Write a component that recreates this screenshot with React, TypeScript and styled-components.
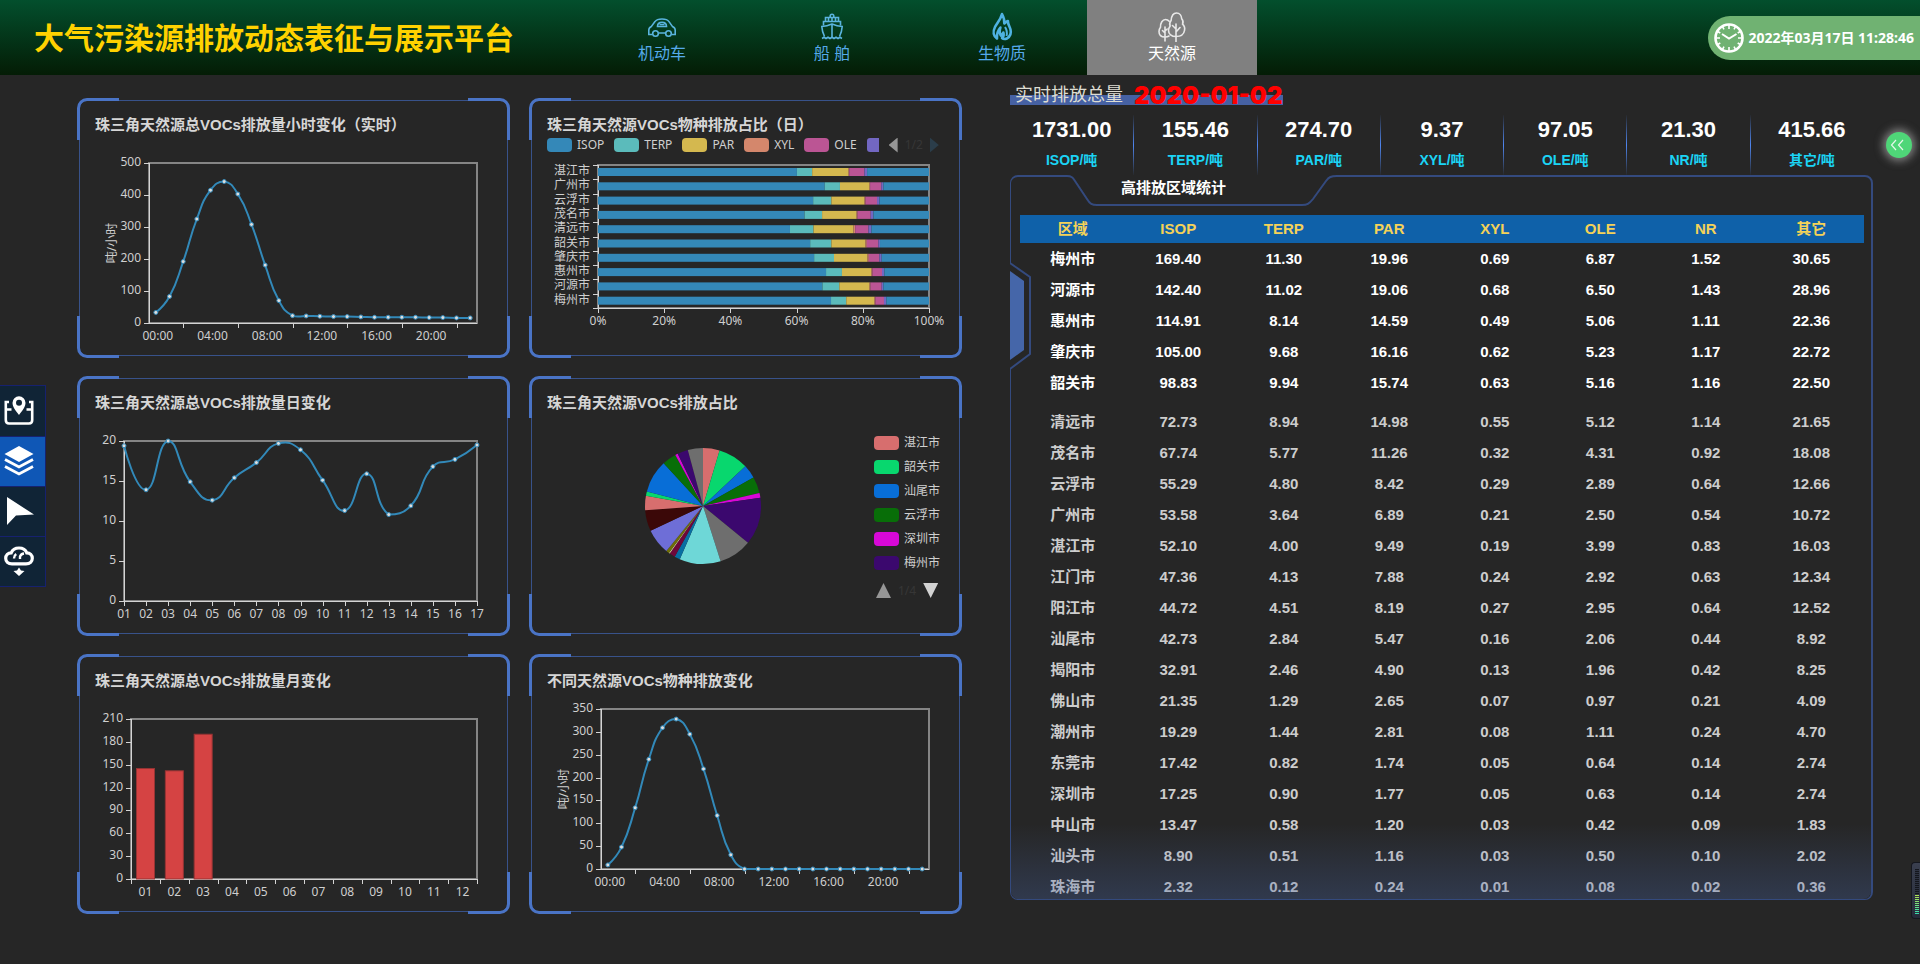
import React from 'react';
import styled, { createGlobalStyle, css } from 'styled-components';

const GlobalStyle = createGlobalStyle`
  *, *::before, *::after { box-sizing: border-box; }
  body {
    margin: 0;
    background: #262626;
    color: #fff;
    font-family: "Liberation Sans", "Noto Sans CJK SC", sans-serif;
  }
  button { font: inherit; border: 0; padding: 0; background: none; cursor: pointer; }
`;

/* ---------- header ---------- */

const Header = styled.header`
  display: flex;
  height: 75px;
  background: linear-gradient(#034f2d, #041c05);
`;

const Brand = styled.h1`
  width: 30%;
  margin: 0;
  padding-left: 34px;
  color: #ffd200;
  font: 700 30px/72px STKaiti, KaiTi, "Noto Sans CJK SC", sans-serif;
  white-space: nowrap;
`;

const Nav = styled.nav`
  display: flex;
  margin-left: 1px;
`;

const NavLink = styled.a<{ $active?: boolean }>`
  display: flex;
  flex-direction: column;
  align-items: center;
  width: 170px;
  padding-top: 12px;
  color: ${(p) => (p.$active ? '#fff' : '#55aaea')};
  background: ${(p) => (p.$active ? '#808080' : 'transparent')};
  font-size: 16px;
  line-height: 24px;
  text-decoration: none;
`;

const NavIcon = styled.svg`
  width: 30px;
  height: 30px;
  fill: none;
  stroke: ${(p) => p.color || '#5ab4de'};
  stroke-width: 1.6;
`;

const Clock = styled.div`
  display: flex;
  align-items: center;
  gap: 4px;
  height: 44px;
  margin: 16px 0 0 auto;
  padding: 0 6px;
  border-radius: 22px 0 0 22px;
  background: #70b272;
  font: 700 14px/20px "Noto Sans", "Noto Sans CJK SC", sans-serif;
  white-space: nowrap;
`;

const ClockIcon = styled.svg`
  width: 30px;
  height: 30px;
  fill: none;
  stroke: #fff;
`;

/* ---------- page ---------- */

const Main = styled.main`
  display: flex;
  align-items: flex-start;
`;

const Tools = styled.aside`
  flex: none;
  width: 46px;
  margin-top: 310px;
  border: 1px solid #16216f;
  border-left: 0;
`;

const ToolButton = styled.button<{ $active?: boolean }>`
  display: block;
  width: 100%;
  height: 50px;
  padding: 0 0 2px 4px;
  background: ${(p) => (p.$active ? '#0f57b6' : '#102436')};
  text-align: left;
  & + & { border-top: 1px solid #16216f; }
`;

const ToolIcon = styled.svg`
  display: block;
  width: 30px;
  height: 30px;
  fill: none;
  stroke: #fff;
`;

const Columns = styled.div`
  flex: 1;
  display: grid;
  grid-template-columns: 885fr 863fr;
  gap: 48px;
  padding: 0 47px 40px 31px;
`;

const Charts = styled.section`
  display: grid;
  grid-template-columns: 1fr 1fr;
  gap: 18px 19px;
  align-content: start;
  padding-top: 23px;
`;

/* ---------- chart panel ---------- */

const PanelBox = styled.article`
  position: relative;
  min-height: 260px;
  padding-top: 17px;
  &::before {
    content: "";
    position: absolute;
    inset: 2px;
    border: 1px solid #38528a;
    border-radius: 8px;
    pointer-events: none;
  }
`;

const Corner = styled.span<{ $v: 'top' | 'bottom'; $h: 'left' | 'right' }>`
  position: absolute;
  ${(p) => css`
    ${p.$v}: 0;
    ${p.$h}: 0;
    border-${p.$v}: 3px solid #4a74c6;
    border-${p.$h}: 3px solid #4a74c6;
    border-${p.$v}-${p.$h}-radius: 10px;
  `}
  width: 42px;
  height: 42px;
`;

const PanelTitle = styled.h2`
  margin: 0;
  padding-left: 18px;
  color: #d6d6d6;
  font-size: 15px;
  line-height: 20px;
  white-space: nowrap;
`;

const Drawing = styled.svg`
  display: block;
  width: 100%;
  font: 12px "Noto Sans", "Noto Sans CJK SC", sans-serif;
  text { fill: #cfcfcf; }
`;

const PieRow = styled.div`
  display: flex;
`;

const PieDrawing = styled.svg`
  flex: 345;
  min-width: 0;
`;

const LegendRow = styled.div`
  display: flex;
  align-items: center;
  gap: 10px;
  height: 20px;
  padding-left: 18px;
  overflow: hidden;
`;

const LegendColumn = styled.div`
  flex: 88;
  display: flex;
  flex-direction: column;
  padding-top: 18px;
`;

const LegendItem = styled.button<{ $tall?: boolean }>`
  display: flex;
  align-items: center;
  gap: 5px;
  height: ${(p) => (p.$tall ? 24 : 20)}px;
  color: #cfcfcf;
  font: 12px/16px "Noto Sans", "Noto Sans CJK SC", sans-serif;
  white-space: nowrap;
`;

const Swatch = styled.span<{ $color: string; $cut?: boolean }>`
  width: ${(p) => (p.$cut ? 12 : 25)}px;
  height: 14px;
  border-radius: ${(p) => (p.$cut ? '3px 0 0 3px' : '4px')};
  background: ${(p) => p.$color};
`;

const Pager = styled.div<{ $below?: boolean }>`
  display: flex;
  align-items: center;
  gap: 7px;
  height: ${(p) => (p.$below ? 31 : 20)}px;
  padding-left: ${(p) => (p.$below ? 2 : 0)}px;
  color: #363636;
  font: 12px/16px "Noto Sans", sans-serif;
`;

const Arrow = styled.button<{ $dir: 'up' | 'down' | 'left' | 'right'; $color: string }>`
  width: ${(p) => (p.$dir === 'up' || p.$dir === 'down' ? 15 : 9)}px;
  height: 15px;
  background: ${(p) => p.$color};
  clip-path: ${(p) =>
    ({
      up: 'polygon(50% 0, 100% 100%, 0 100%)',
      down: 'polygon(0 0, 100% 0, 50% 100%)',
      left: 'polygon(100% 0, 100% 100%, 0 50%)',
      right: 'polygon(0 0, 100% 50%, 0 100%)',
    })[p.$dir]};
`;

function Panel({ title, children }: { title: string; children: React.ReactNode }) {
  return (
    <PanelBox>
      <Corner $v="top" $h="left" />
      <Corner $v="top" $h="right" />
      <Corner $v="bottom" $h="left" />
      <Corner $v="bottom" $h="right" />
      <PanelTitle>{title}</PanelTitle>
      {children}
    </PanelBox>
  );
}

/* ---------- chart drawing ---------- */

type Pt = [number, number];
type Area = { left: number; right: number; top: number; bottom: number };

const clamp = (v: number, lo: number, hi: number) => Math.min(hi, Math.max(lo, v));

function smoothPath(pts: Pt[]): string {
  const ys = pts.map((p) => p[1]);
  const lo = Math.min(...ys);
  const hi = Math.max(...ys);
  let d = `M${pts[0][0]} ${pts[0][1]}`;
  let cp: Pt = pts[0];
  for (let i = 1; i < pts.length; i++) {
    const p = pts[i];
    const next = pts[i + 1];
    let inCp: Pt = p;
    let outCp: Pt = p;
    if (next) {
      const prev = pts[i - 1];
      const a = Math.hypot(p[0] - prev[0], p[1] - prev[1]);
      const b = Math.hypot(next[0] - p[0], next[1] - p[1]);
      const r = b / (a + b);
      const vx = next[0] - prev[0];
      const vy = next[1] - prev[1];
      inCp = [p[0] - vx * 0.5 * (1 - r), clamp(p[1] - vy * 0.5 * (1 - r), lo, hi)];
      outCp = [p[0] + vx * 0.5 * r, clamp(p[1] + vy * 0.5 * r, lo, hi)];
    }
    d += `C${cp[0]} ${cp[1]} ${inCp[0]} ${inCp[1]} ${p[0]} ${p[1]}`;
    cp = outCp;
  }
  return d;
}

function Frame({ area }: { area: Area }) {
  const { left, right, top, bottom } = area;
  return (
    <g fill="none" shapeRendering="crispEdges">
      <rect x={left} y={top} width={right - left} height={bottom - top} stroke="#858585" strokeWidth="2" />
      <path d={`M${left + 0.5} ${top}V${bottom + 0.5}H${right}`} stroke="#d4d4d4" />
    </g>
  );
}

function YAxis({ area, max, step }: { area: Area; max: number; step: number }) {
  const ticks = Array.from({ length: max / step + 1 }, (_, i) => i * step);
  return (
    <g>
      {ticks.map((t) => {
        const y = Math.round(area.bottom - (t / max) * (area.bottom - area.top));
        return (
          <g key={t}>
            <path d={`M${area.left - 5} ${y + 0.5}h5`} stroke="#d4d4d4" shapeRendering="crispEdges" />
            <text x={area.left - 8} y={y + 3} textAnchor="end">{t}</text>
          </g>
        );
      })}
    </g>
  );
}

function XTicks({ area, xs }: { area: Area; xs: number[] }) {
  return (
    <path
      d={xs.map((x) => `M${Math.round(x) + 0.5} ${area.bottom}v5`).join('')}
      stroke="#d4d4d4"
      shapeRendering="crispEdges"
    />
  );
}

function Line({ pts }: { pts: Pt[] }) {
  return (
    <g>
      <path d={smoothPath(pts)} fill="none" stroke="#3289b9" strokeWidth="2" />
      {pts.map(([x, y]) => (
        <circle key={x} cx={x} cy={y} r="2" fill="#ddd" stroke="#3289b9" strokeWidth="1" />
      ))}
    </g>
  );
}

const HOURS = ['00:00', '04:00', '08:00', '12:00', '16:00', '20:00'];

function HourChart({ values, max, step, top }: { values: number[]; max: number; step: number; top: number }) {
  const area = { left: 72, right: 400, top, bottom: top + 160 };
  const band = 328 / 24;
  const x = (i: number) => area.left + band * (i + 0.5);
  const pts = values.map((v, i): Pt => [x(i), area.bottom - (v / max) * 160]);
  return (
    <Drawing viewBox="0 37 433 223">
      <Frame area={area} />
      <YAxis area={area} max={max} step={step} />
      <XTicks area={area} xs={[2, 6, 10, 14, 18, 22].map(x)} />
      {HOURS.map((h, i) => (
        <text key={h} x={x(i * 4) + 2} y={area.bottom + 17} textAnchor="middle">{h}</text>
      ))}
      <text transform={`translate(39 ${top + 80}) rotate(-90)`} textAnchor="middle">吨/小时</text>
      <Line pts={pts} />
    </Drawing>
  );
}

const DAILY = [19.4, 13.9, 20, 14.9, 12.6, 15.4, 17.3, 19.7, 18.9, 15.1, 11.3, 15.9, 10.8, 11.9, 16.8, 17.7, 19.5];

const pad2 = (n: number) => String(n).padStart(2, '0');

function DayChart() {
  const area = { left: 47, right: 400, top: 65, bottom: 225 };
  const x = (i: number) => area.left + (353 / 16) * i;
  return (
    <Drawing viewBox="0 37 433 223">
      <Frame area={area} />
      <YAxis area={area} max={20} step={5} />
      <XTicks area={area} xs={DAILY.map((_, i) => x(i))} />
      {DAILY.map((_, i) => (
        <text key={i} x={x(i)} y={242} textAnchor="middle">{pad2(i + 1)}</text>
      ))}
      <Line pts={DAILY.map((v, i): Pt => [x(i), area.bottom - v * 8])} />
    </Drawing>
  );
}

function MonthChart() {
  const area = { left: 54, right: 400, top: 65, bottom: 225 };
  const band = 346 / 12;
  return (
    <Drawing viewBox="0 37 433 223">
      <Frame area={area} />
      <YAxis area={area} max={210} step={30} />
      <XTicks area={area} xs={Array.from({ length: 13 }, (_, i) => area.left + band * i)} />
      {Array.from({ length: 12 }, (_, i) => (
        <text key={i} x={area.left + band * (i + 0.5)} y={242} textAnchor="middle">{pad2(i + 1)}</text>
      ))}
      {[145, 142, 190].map((v, i) => {
        const h = (v / 210) * 160;
        return (
          <rect key={i} x={area.left + band * i + 5.5} y={area.bottom - h} width="18" height={h}
            fill="#d54343" stroke="#963434" strokeWidth="1" />
        );
      })}
    </Drawing>
  );
}

const SPECIES: [string, string][] = [
  ['ISOP', '#3488b8'],
  ['TERP', '#5bbbbb'],
  ['PAR', '#d4b84f'],
  ['XYL', '#d4876c'],
  ['OLE', '#bb5594'],
];
const STACK_COLORS = [...SPECIES.map((s) => s[1]), '#7267c2', '#3488b8'];

/* cumulative share, in tenths of a percent, at the end of each species */
const SHARES: [string, number[]][] = [
  ['湛江市', [601, 647, 757, 759, 805, 813, 1000]],
  ['广州市', [685, 731, 820, 822, 856, 862, 1000]],
  ['云浮市', [650, 705, 805, 808, 843, 850, 1000]],
  ['茂名市', [624, 677, 781, 784, 824, 832, 1000]],
  ['清远市', [580, 651, 772, 777, 817, 826, 1000]],
  ['韶关市', [641, 705, 808, 812, 847, 852, 1000]],
  ['肇庆市', [653, 713, 814, 818, 850, 857, 1000]],
  ['惠州市', [689, 737, 826, 829, 858, 865, 1000]],
  ['河源市', [678, 729, 820, 823, 857, 862, 1000]],
  ['梅州市', [704, 750, 835, 838, 864, 871, 1000]],
];

function StackChart() {
  const area = { left: 69, right: 400, top: 67, bottom: 210 };
  const row = 143 / 10;
  const x = (v: number) => area.left + (v / 1000) * 331;
  return (
    <Drawing viewBox="0 57 433 203">
      <Frame area={area} />
      <XTicks area={area} xs={[0, 200, 400, 600, 800, 1000].map(x)} />
      {[0, 20, 40, 60, 80, 100].map((p) => (
        <text key={p} x={x(p * 10)} y={227} textAnchor="middle">{p}%</text>
      ))}
      {Array.from({ length: 11 }, (_, i) => (
        <path key={i} d={`M64 ${Math.round(area.top + row * i) + 0.5}h5`} stroke="#d4d4d4" shapeRendering="crispEdges" />
      ))}
      {SHARES.map(([city, cuts], r) => {
        const y = area.top + row * r + 3;
        return (
          <g key={city}>
            <text x="61" y={y + 7} textAnchor="end">{city}</text>
            {cuts.map((c, i) => {
              const from = x(i ? cuts[i - 1] : 0);
              return <rect key={i} x={from} y={y} width={x(c) - from} height="8" fill={STACK_COLORS[i]} />;
            })}
          </g>
        );
      })}
    </Drawing>
  );
}

const SLICES: [number, string][] = [
  [16.6, '#d76e6e'], [46.9, '#08d76e'], [60.5, '#086ed7'], [77, '#086e08'], [81.8, '#d708d7'],
  [129.2, '#3b086e'], [162.3, '#6e6e6e'], [203.6, '#6ed7d7'], [209.2, '#086ea2'], [215, '#6e083b'],
  [216, '#d7d7a2'], [219.2, '#6e6e08'], [244.7, '#6e6ed7'], [265.7, '#3b0808'], [280.2, '#d76e6e'],
  [284.6, '#08d76e'], [317.3, '#086ed7'], [331.5, '#086e08'], [334.2, '#d708d7'], [344.8, '#3b086e'],
  [360, '#6e6e6e'],
];

const PIE_LEGEND: [string, string][] = [
  ['湛江市', '#d76e6e'], ['韶关市', '#08d76e'], ['汕尾市', '#086ed7'],
  ['云浮市', '#086e08'], ['深圳市', '#d708d7'], ['梅州市', '#3b086e'],
];

function PieChart() {
  const cx = 174;
  const cy = 130;
  const r = 58;
  const at = (deg: number) => {
    const a = (deg * Math.PI) / 180;
    return `${cx + r * Math.sin(a)} ${cy - r * Math.cos(a)}`;
  };
  return (
    <PieRow>
      <PieDrawing viewBox="0 37 345 223">
        {SLICES.map(([end, color], i) => (
          <path key={end} d={`M${cx} ${cy}L${at(i ? SLICES[i - 1][0] : 0)}A${r} ${r} 0 0 1 ${at(end)}Z`} fill={color} />
        ))}
      </PieDrawing>
      <LegendColumn>
        {PIE_LEGEND.map(([name, color]) => (
          <LegendItem key={name} $tall>
            <Swatch $color={color} />
            {name}
          </LegendItem>
        ))}
        <Pager $below>
          <Arrow $dir="up" $color="#969696" aria-label="上一页" />
          <span>1/4</span>
          <Arrow $dir="down" $color="#d2d2d2" aria-label="下一页" />
        </Pager>
      </LegendColumn>
    </PieRow>
  );
}

const HOURLY = [33, 83, 192, 325, 415, 442, 403, 308, 181, 70, 23, 22, 21, 20, 20, 19, 18, 18, 18, 18, 17, 17, 16, 16];
const HOURLY_SPECIES = [9, 48, 134, 240, 309, 328, 295, 219, 117, 31, 0, 0, 0, 0, 0, 0, 0, 0, 0, 0, 0, 0, 0, 0];

/* ---------- totals and table ---------- */

const Summary = styled.section`
  padding-top: 10px;
`;

const SummaryTitle = styled.h2`
  display: inline-flex;
  gap: 11px;
  height: 20px;
  margin: 0 0 10px;
  padding: 0 1px 0 5px;
  background: linear-gradient(transparent 50%, #4661a3 50%);
  color: #dddcd2;
  font-size: 18px;
  font-weight: 400;
  line-height: 20px;
  vertical-align: top;
  white-space: nowrap;
`;

const DateText = styled.time`
  color: #f00;
  font: 900 24px/22px "Arial Black", Inter, sans-serif;
`;

const Totals = styled.dl`
  display: grid;
  grid-template-columns: repeat(7, 1fr);
  margin: 0;
`;

const Total = styled.div`
  display: flex;
  flex-direction: column-reverse;
  text-align: center;
  font-weight: 700;
  line-height: 30px;
  & + & {
    border-left: 1px solid;
    border-image: linear-gradient(transparent, #4f86f0, transparent) 1;
  }
`;

const TotalName = styled.dt`
  color: #1bd4f5;
  font-size: 14px;
`;

const TotalValue = styled.dd`
  margin: 0;
  font-size: 22px;
`;

const Board = styled.div`
  position: relative;
  border: solid #344a7e;
  border-width: 2px 2px 1px 1px;
  border-radius: 8px;
  &::after {
    content: "";
    position: absolute;
    inset: auto 0 0;
    height: 75px;
    border-radius: 0 0 8px 8px;
    background: linear-gradient(transparent, rgba(70, 98, 160, 0.32));
    pointer-events: none;
  }
`;

const BoardTab = styled.svg`
  position: absolute;
  top: -2px;
  left: 56px;
  width: 270px;
  height: 32px;
`;

const BoardGrip = styled.svg`
  position: absolute;
  top: 84px;
  left: -1px;
  width: 22px;
  height: 112px;
`;

const BoardTitle = styled.h3`
  position: relative;
  margin: 0 0 16px;
  padding-left: 110px;
  font-size: 15px;
  line-height: 22px;
`;

const TableWrap = styled.div`
  margin: 0 7px -3px 9px;
`;

const Table = styled.table`
  width: 100%;
  table-layout: fixed;
  border-collapse: collapse;
  font-size: 15px;
  font-weight: 700;
  text-align: center;
  line-height: 20px;
  th, td { padding: 0; }
  thead tr { height: 28px; background: #0f61a9; color: #f4d258; }
`;

const TableRow = styled.tr<{ $top?: boolean; $spaced?: boolean }>`
  height: ${(p) => (p.$spaced ? 39 : 31)}px;
  color: ${(p) => (p.$top ? '#fff' : '#cdcdcd')};
  td { padding-top: ${(p) => (p.$spaced ? 8 : 0)}px; }
`;

const TOTALS: [string, string][] = [
  ['ISOP/吨', '1731.00'], ['TERP/吨', '155.46'], ['PAR/吨', '274.70'], ['XYL/吨', '9.37'],
  ['OLE/吨', '97.05'], ['NR/吨', '21.30'], ['其它/吨', '415.66'],
];

const ROWS = `梅州市 169.40 11.30 19.96 0.69 6.87 1.52 30.65
河源市 142.40 11.02 19.06 0.68 6.50 1.43 28.96
惠州市 114.91 8.14 14.59 0.49 5.06 1.11 22.36
肇庆市 105.00 9.68 16.16 0.62 5.23 1.17 22.72
韶关市 98.83 9.94 15.74 0.63 5.16 1.16 22.50
清远市 72.73 8.94 14.98 0.55 5.12 1.14 21.65
茂名市 67.74 5.77 11.26 0.32 4.31 0.92 18.08
云浮市 55.29 4.80 8.42 0.29 2.89 0.64 12.66
广州市 53.58 3.64 6.89 0.21 2.50 0.54 10.72
湛江市 52.10 4.00 9.49 0.19 3.99 0.83 16.03
江门市 47.36 4.13 7.88 0.24 2.92 0.63 12.34
阳江市 44.72 4.51 8.19 0.27 2.95 0.64 12.52
汕尾市 42.73 2.84 5.47 0.16 2.06 0.44 8.92
揭阳市 32.91 2.46 4.90 0.13 1.96 0.42 8.25
佛山市 21.35 1.29 2.65 0.07 0.97 0.21 4.09
潮州市 19.29 1.44 2.81 0.08 1.11 0.24 4.70
东莞市 17.42 0.82 1.74 0.05 0.64 0.14 2.74
深圳市 17.25 0.90 1.77 0.05 0.63 0.14 2.74
中山市 13.47 0.58 1.20 0.03 0.42 0.09 1.83
汕头市 8.90 0.51 1.16 0.03 0.50 0.10 2.02
珠海市 2.32 0.12 0.24 0.01 0.08 0.02 0.36`
  .split('\n')
  .map((r) => r.split(' '));

/* ---------- floating controls ---------- */

const Collapse = styled.button`
  position: absolute;
  top: 132px;
  right: 8px;
  width: 26px;
  height: 26px;
  border-radius: 50%;
  background: #4fd678;
  box-shadow: 0 0 8px 3px rgba(190, 190, 190, 0.6);
  svg { display: block; margin-left: 4px; }
`;

const Meter = styled.div`
  position: absolute;
  top: 862px;
  right: 0;
  width: 9px;
  height: 57px;
  padding: 6px 2px 5px 3px;
  border: 1px solid #15171f;
  border-right: 0;
  border-radius: 4px 0 0 4px;
  background: linear-gradient(#3a3f4f, #262b3a);
  &::before {
    content: "";
    display: block;
    width: 4px;
    height: 45px;
    background:
      repeating-linear-gradient(transparent 0 1px, #2d3241 1px 2px),
      linear-gradient(#14161d 57%, #b4e04c 57%, #35dcae);
  }
`;

/* ---------- icons ---------- */

const CarIcon = () => (
  <NavIcon viewBox="0 0 30 30">
    <path d="M5 22.500H1.800V18c0-1.800.8-2.800 2.600-3.600L8 9.600C9.400 7.600 11.600 7 15 7s5.600.6 7 2.600l3.400 4.800c1.900.8 2.800 1.800 2.800 3.600v4.500H25M12 21h6" />
    <circle cx="8.500" cy="21.500" r="2.800" />
    <circle cx="21.500" cy="21.500" r="2.800" />
    <path d="M10.500 14.500c0-3 1.500-4.300 4.500-4.300s4.500 1.300 4.500 4.300zM12.500 12.500h5" />
  </NavIcon>
);

const ShipIcon = () => (
  <NavIcon viewBox="0 0 30 30">
    <path d="M13.200 5.500V4a1.800 1.800 0 0 1 3.600 0v1.500M8.500 9.500v-4h13v4M11.500 5.500v4M15 5.500v4M18.500 5.500v4M6.500 13.500V9.500h17v4" />
    <path d="M7.500 24.500C6 21.500 5 18 4.800 14.500 8.500 14.300 12 13.300 15 12c3 1.300 6.500 2.300 10.200 2.500-.2 3.500-1.200 7-2.700 10M15 12v13.500" />
    <path d="M5 26.500l2-1.200 2 1.200 2-1.200 2 1.200 2-1.200 2 1.200 2-1.200 2 1.200 2-1.200 2 1.200" />
  </NavIcon>
);

const FlameIcon = () => (
  <NavIcon viewBox="0 0 30 30" color="#4fb2e2">
    <path
      d="M10 26.500C6.500 24.500 5.500 20 8 15c2-4 5.500-7 7-13 1.600 3 2.600 6.500 2.300 9.500 1.200-1.200 2.200-2 3.600-2.500-.2 3 1.800 5.500 2.600 8.500.9 3.500-.5 7-3.500 9-2.200.9-4 .5-5-.5 1.800-1.500 2-3.500 1.400-5.500-.6 1.600-1.600 2.200-2.600 3-1.300-2-1.300-5-.4-8-2.400 2.700-3.800 6.500-3.400 11z"
      strokeWidth="2.600"
      strokeLinejoin="round"
    />
    <path d="M18 15c2 3 2.300 6 1.500 9" strokeWidth="2" />
  </NavIcon>
);

const TreesIcon = () => (
  <NavIcon viewBox="0 0 30 30" color="#e8e8e8" strokeLinecap="round">
    <path d="M19 30V12M19 20l4-4.500M19 17l-3.500-3.500" />
    <path d="M19 24.500c-4.500 0-7.500-2.500-7.500-6 0-2 .8-3.300 1.600-4.500-.8-2-.3-4 1-5.500C14.500 4 16.500 1 19.500 1c3.200 0 5 2.800 5.200 5.800 1.500 1.700 1.600 3.800.9 5.400 2 1.800 2.400 4 1.900 6.300-.6 3.800-4 6-8.500 6z" />
    <path d="M8 29V15M8 21l-2.500-2.500M8 19l2.200-2" />
    <path d="M12 24c-1.200.8-2.600 1-4 1-3.500 0-6-2-6-5.500 0-1.800.7-3.200 1.500-4.200C3.300 11 5.500 7.500 8.500 7.500c1.500 0 2.800.7 3.700 1.800" />
  </NavIcon>
);

const NAV: [string, React.FC][] = [
  ['机动车', CarIcon],
  ['船 舶', ShipIcon],
  ['生物质', FlameIcon],
  ['天然源', TreesIcon],
];

const TOOLS: { label: string; art: React.ReactNode }[] = [
  {
    label: '地图定位',
    art: (
      <>
        <path d="M5 7H1.800v18c0 2.200 1 3.500 3.200 3.500h20c2.200 0 3.200-1.300 3.200-3.500V7H25M2 14.500h5.500M22.500 14.500H28" strokeWidth="2.600" />
        <path d="M15 20c-3.500-4.500-6.500-8-6.500-12.200a6.500 6.500 0 0 1 13 0C21.500 12 18.500 15.500 15 20z" fill="#fff" stroke="none" />
        <circle cx="15" cy="7.800" r="3" fill="#102436" stroke="none" />
      </>
    ),
  },
  {
    label: '图层',
    art: (
      <>
        <path d="M15 0l14.500 8L15 16 .5 8z" fill="#fff" stroke="none" />
        <path d="M1 13.500l14 7.500 14-7.500M1 20.500L15 28l14-7.500" strokeWidth="2.800" />
      </>
    ),
  },
  { label: '选择', art: <path d="M3 1v28l9-9.500 18-1z" fill="#fff" stroke="none" /> },
  {
    label: '下载',
    art: (
      <>
        <path
          d="M8 17.800C4 17.800 1.700 15.500 1.700 12.300 1.700 9 4 6.800 7.200 6.800 8.500 3.500 11.500 2 15 2s6.500 1.500 7.800 4.800c3.200 0 5.500 2.200 5.500 5.500 0 3.200-2.300 5.500-6.300 5.500z"
          strokeWidth="3.200"
        />
        <path d="M10 12.500c0-2 .8-3.500 2.200-4.500M16 10.500c.6-1.500 2-2.800 4-3M16 10v3" strokeWidth="2.400" />
        <path d="M15 21.500l2 3 3.500.5-5.500 5-5.500-5 3.500-.5z" fill="#fff" stroke="none" />
      </>
    ),
  },
];

export default function App() {
  return (
    <>
      <GlobalStyle />
      <Header>
        <Brand>大气污染源排放动态表征与展示平台</Brand>
        <Nav>
          {NAV.map(([label, Icon], i) => (
            <NavLink key={label} href="#" $active={i === 3}>
              <Icon />
              {label}
            </NavLink>
          ))}
        </Nav>
        <Clock>
          <ClockIcon viewBox="0 0 30 30">
            <circle cx="15" cy="15" r="13.500" strokeWidth="2.600" />
            <path
              d="M15 2v4M15 24v4M2 15h4M24 15h4M8.500 3.700l1.500 2.600M20 23.700l1.500 2.600M3.700 8.500l2.600 1.500M23.700 20l2.600 1.500M3.700 21.500l2.600-1.500M23.700 10l2.600-1.500M8.500 26.300l1.500-2.600M20 6.300l1.500-2.600"
              strokeWidth="1.600"
            />
            <path d="M8 11l7 4.500 7.500-4.500" strokeWidth="2" />
          </ClockIcon>
          2022年03月17日 11:28:46
        </Clock>
      </Header>

      <Main>
        <Tools>
          {TOOLS.map((t, i) => (
            <ToolButton key={t.label} aria-label={t.label} $active={i === 1}>
              <ToolIcon viewBox="0 0 30 30">{t.art}</ToolIcon>
            </ToolButton>
          ))}
        </Tools>

        <Columns>
          <Charts>
            <Panel title="珠三角天然源总VOCs排放量小时变化（实时）">
              <HourChart values={HOURLY} max={500} step={100} top={65} />
            </Panel>
            <Panel title="珠三角天然源VOCs物种排放占比（日）">
              <LegendRow>
                {SPECIES.map(([name, color]) => (
                  <LegendItem key={name}>
                    <Swatch $color={color} />
                    {name}
                  </LegendItem>
                ))}
                <Swatch $color="#7267c2" $cut />
                <Pager>
                  <Arrow $dir="left" $color="#969696" aria-label="上一页" />
                  <span>1/2</span>
                  <Arrow $dir="right" $color="#2b3d4a" aria-label="下一页" />
                </Pager>
              </LegendRow>
              <StackChart />
            </Panel>
            <Panel title="珠三角天然源总VOCs排放量日变化">
              <DayChart />
            </Panel>
            <Panel title="珠三角天然源VOCs排放占比">
              <PieChart />
            </Panel>
            <Panel title="珠三角天然源总VOCs排放量月变化">
              <MonthChart />
            </Panel>
            <Panel title="不同天然源VOCs物种排放变化">
              <HourChart values={HOURLY_SPECIES} max={350} step={50} top={55} />
            </Panel>
          </Charts>

          <Summary>
            <SummaryTitle>
              实时排放总量
              <DateText>2020-01-02</DateText>
            </SummaryTitle>
            <Totals>
              {TOTALS.map(([name, value]) => (
                <Total key={name}>
                  <TotalName>{name}</TotalName>
                  <TotalValue>{value}</TotalValue>
                </Total>
              ))}
            </Totals>
            <Board>
              <BoardTab viewBox="0 0 270 32">
                <path d="M0 0h270v3H0z" fill="#262626" />
                <path d="M0 1c5 0 6 2 8 5l12 18c3 5 5 6 10 6h205c5 0 7-1 11-6l13-18c3-4 5-5 11-5" fill="none" stroke="#344a7e" strokeWidth="2" />
              </BoardTab>
              <BoardGrip viewBox="0 0 22 112">
                <path d="M0 2h2v106H0z" fill="#262626" />
                <path d="M0 2l20 14v77L0 108" fill="none" stroke="#344a7e" strokeWidth="2" />
                <path d="M0 10l14 10v69L0 99z" fill="#4566a9" />
              </BoardGrip>
              <BoardTitle>高排放区域统计</BoardTitle>
              <TableWrap>
                <Table>
                  <thead>
                    <tr>
                      {['区域', 'ISOP', 'TERP', 'PAR', 'XYL', 'OLE', 'NR', '其它'].map((h) => (
                        <th key={h} scope="col">{h}</th>
                      ))}
                    </tr>
                  </thead>
                  <tbody>
                    {ROWS.map((cells, i) => (
                      <TableRow key={cells[0]} $top={i < 5} $spaced={i === 5}>
                        {cells.map((c, j) => (
                          <td key={j}>{c}</td>
                        ))}
                      </TableRow>
                    ))}
                  </tbody>
                </Table>
              </TableWrap>
            </Board>
          </Summary>
        </Columns>
      </Main>

      <Collapse aria-label="展开">
        <svg width="14" height="14" viewBox="0 0 14 14" fill="none" stroke="#e6f8ea" strokeWidth="1.200">
          <path d="M6 2L1.500 7 6 12M13 2L8.500 7l4.500 5" />
        </svg>
      </Collapse>
      <Meter />
    </>
  );
}
